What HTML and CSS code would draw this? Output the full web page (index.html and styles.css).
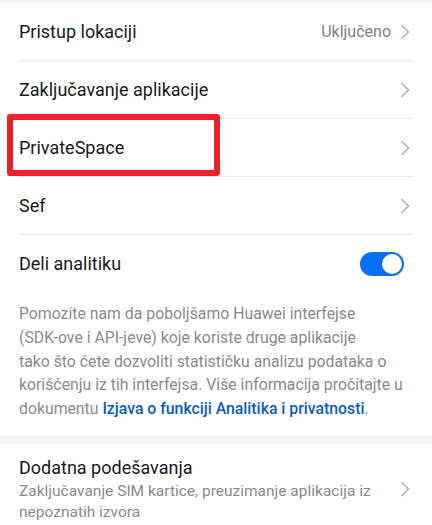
FILE: index.html
```
<!DOCTYPE html>
<html lang="sr">
<head>
	<meta charset="utf-8">
	<title>Privatnost</title>
	<link rel="stylesheet" href="styles.css">
</head>
<body>
	<div class="top-band"></div>

	<div class="list">
		<div class="row">
			<span class="title">Pristup lokaciji</span>
			<span class="right"><span class="value">Uključeno</span><svg class="chev" width="10" height="16" viewBox="0 0 10 16"><path d="M1.5 1 L8.5 8 L1.5 15" /></svg></span>
		</div>
		<div class="row">
			<span class="title">Zaključavanje aplikacije</span>
			<span class="right"><svg class="chev" width="10" height="16" viewBox="0 0 10 16"><path d="M1.5 1 L8.5 8 L1.5 15" /></svg></span>
		</div>
		<div class="row">
			<span class="title">PrivateSpace</span>
			<span class="right"><svg class="chev" width="10" height="16" viewBox="0 0 10 16"><path d="M1.5 1 L8.5 8 L1.5 15" /></svg></span>
		</div>
		<div class="row">
			<span class="title">Sef</span>
			<span class="right"><svg class="chev" width="10" height="16" viewBox="0 0 10 16"><path d="M1.5 1 L8.5 8 L1.5 15" /></svg></span>
		</div>
		<div class="row last">
			<span class="title">Deli analitiku</span>
			<span class="toggle"><span class="knob"></span></span>
		</div>
		<p class="note">Pomozite nam da poboljšamo Huawei interfejse<br>
			(SDK-ove i API-jeve) koje koriste druge aplikacije<br>
			tako što ćete dozvoliti statističku analizu podataka o<br>
			korišćenju iz tih interfejsa. Više informacija pročitajte u<br>
			dokumentu <a href="#">Izjava o funkciji Analitika i privatnosti</a>.</p>
	</div>

	<div class="gap"></div>

	<div class="list">
		<div class="row two-line">
			<div class="text">
				<div class="title">Dodatna podešavanja</div>
				<div class="sub">Zaključavanje SIM kartice, preuzimanje aplikacija iz<br>nepoznatih izvora</div>
			</div>
			<span class="right"><svg class="chev" width="10" height="16" viewBox="0 0 10 16"><path d="M1.5 1 L8.5 8 L1.5 15" /></svg></span>
		</div>
	</div>

	<!-- highlight round PrivateSpace -->
	<div class="highlight"></div>
</body>
</html>
```

FILE: styles.css
```
body {
	margin: 0;
	padding: 0;
	background: #fff;
	font-family: Roboto, "Noto Sans", sans-serif;
	color: #191919;
	position: relative;
	width: 432px;
	height: 525px;
	overflow: hidden;
}

.top-band {
	height: 3px;
	background: #f3f3f3;
}

.list {
	padding: 0 19px 0 19px;
}

.row {
	height: 57px;
	border-bottom: 1px solid #e9e9e9;
	display: flex;
	align-items: center;
	justify-content: space-between;
}
.row.last {
	border-bottom: none;
}

.title {
	font-size: 18px;
}

.right {
	display: flex;
	align-items: center;
	gap: 9px;
	margin-right: 3px;
}
.value {
	font-size: 16px;
	color: #7f7f7f;
}
.chev path {
	fill: none;
	stroke: #b3b3b3;
	stroke-width: 1.6;
}

.toggle {
	width: 44px;
	height: 24px;
	border-radius: 12px;
	background: #0a6ff3;
	display: flex;
	align-items: center;
	justify-content: flex-end;
	margin-right: 9px;
}
.knob {
	width: 20px;
	height: 20px;
	border-radius: 50%;
	background: #fff;
	margin-right: 2px;
}

.note {
	margin: 10px 0 0 0;
	padding-bottom: 14px;
	white-space: nowrap;
	font-size: 15.8px;
	line-height: 23.8px;
	color: #898989;
}
.note a {
	color: #0b5cc0;
	font-weight: 500;
	text-decoration: none;
}

.gap {
	height: 9px;
	background: #f3f3f3;
}

.row.two-line {
	height: auto;
	border-bottom: none;
	padding-top: 12px;
}
.two-line .title {
	line-height: 24px;
}
.sub {
	font-size: 15.5px;
	line-height: 21px;
	color: #898989;
	margin-top: 1px;
	white-space: nowrap;
}

.highlight {
	position: absolute;
	left: 7px;
	top: 114px;
	width: 201px;
	height: 50px;
	border: 6px solid #ee1f2a;
	border-radius: 3px;
}
```
